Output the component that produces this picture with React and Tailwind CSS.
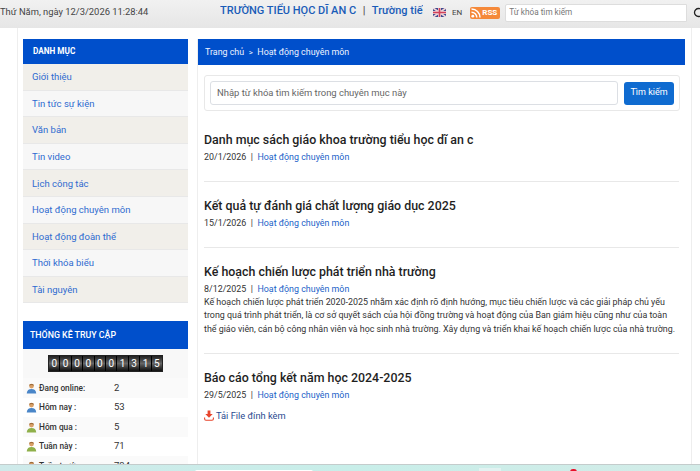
import React from 'react';
import { Search } from 'lucide-react';

const menu = ['Giới thiệu', 'Tin tức sự kiện', 'Văn bản', 'Tin video', 'Lịch công tác', 'Hoạt động chuyên môn', 'Hoạt động đoàn thể', 'Thời khóa biểu', 'Tài nguyên'];

const stats = [
  ['Đang online:', '2', '#4a86c8'],
  ['Hôm nay :', '53', '#4a86c8'],
  ['Hôm qua :', '5', '#8fb04a'],
  ['Tuần này :', '71', '#8fb04a'],
  ['Tuần trước :', '734', '#e08a2c'],
];

function UserIcon({ color }) {
  return (
    <svg width="11" height="11" viewBox="0 0 12 12" className="shrink-0">
      <circle cx="6" cy="3.4" r="2.6" fill="#d9a066" />
      <path d="M3.2 2.8C3.6 1 8.4 1 8.8 2.8 7.5 2 4.5 2 3.2 2.8z" fill="#8a5a2b" />
      <path d="M0.8 11.5C1 8 3 6.6 6 6.6s5 1.4 5.2 4.9z" fill={color} />
    </svg>
  );
}

function UkFlag() {
  return (
    <svg width="13" height="9" viewBox="0 0 13 9" className="shrink-0">
      <rect width="13" height="9" fill="#3c4a8f" />
      <path d="M0 0l13 9M13 0L0 9" stroke="#f0d4d8" strokeWidth="1.8" />
      <path d="M6.5 0v9M0 4.5h13" stroke="#f0d4d8" strokeWidth="3" />
      <path d="M6.5 0v9M0 4.5h13" stroke="#d0405a" strokeWidth="1.6" />
    </svg>
  );
}

function RssBadge() {
  return (
    <div className="flex h-[12px] w-[30px] items-center gap-[1px] overflow-hidden rounded-[2px] bg-[#f5893a] pl-[1px]">
      <svg width="10" height="10" viewBox="0 0 10 10" className="shrink-0">
        <circle cx="1.8" cy="8.2" r="1.4" fill="#fff" />
        <path d="M0.5 4.2a5.3 5.3 0 0 1 5.3 5.3M0.5 1a8.5 8.5 0 0 1 8.5 8.5" fill="none" stroke="#fff" strokeWidth="1.5" />
      </svg>
      <span className="text-[8px] leading-none font-bold text-white">RSS</span>
    </div>
  );
}

function FileIcon() {
  return (
    <svg width="10" height="11" viewBox="0 0 10 11" className="shrink-0">
      <path d="M3.6 0.5h2.8v3.6h2.3L5 7.8 1.3 4.1h2.3z" fill="#e8452c" />
      <path d="M0.6 7.6v1.2c0 .8.6 1.4 1.4 1.4h6c.8 0 1.4-.6 1.4-1.4V7.6" fill="none" stroke="#e8452c" strokeWidth="1.1" />
    </svg>
  );
}

function Meta({ date }) {
  return (
    <div className="mt-[1px] text-[8.9px] leading-[14px] text-[#333]">
      {date}<span className="mx-[4.5px]">|</span><span className="text-[#1a5fc8]">Hoạt động chuyên môn</span>
    </div>
  );
}

function Title({ children }) {
  return <h3 className="pt-[1px] text-[12.4px] leading-[18px] font-medium text-[#1f1f1f]">{children}</h3>;
}

export default function App() {
  return (
    <div className="relative h-[471px] w-[700px] overflow-hidden bg-white font-['Roboto',sans-serif]">
      {/* Thanh trên cùng */}
      <div className="flex h-[28px] items-center bg-gradient-to-b from-[#f1f1f1] to-[#e6e6e6] pb-[3px]">
        <div className="w-[220px] shrink-0 text-[9.4px] text-[#444]">Thứ Năm, ngày 12/3/2026 11:28:44</div>
        <div className="w-[203px] shrink-0 overflow-hidden pb-[3px] text-[11px] font-medium whitespace-nowrap text-[#1a5cb8]">
          TRƯỜNG TIỂU HỌC DĨ AN C<span className="mx-[6.5px] text-[#555]">|</span>Trường tiế
        </div>
        <div className="ml-[10px] flex items-center gap-[6px]">
          <UkFlag />
          <span className="text-[8px] text-[#444]">EN</span>
        </div>
        <div className="ml-[8px]"><RssBadge /></div>
        <div className="ml-[5px] flex h-[18px] w-[182px] shrink-0 items-center rounded-l-[2px] border border-[#ddd] bg-white pl-[3px] text-[8.2px] text-[#777]">Từ khóa tìm kiếm</div>
        <div className="ml-[6px] shrink-0"><Search size={12} strokeWidth={2.6} className="text-[#222]" /></div>
      </div>

      {/* Khung chính */}
      <div className="ml-[17px] flex h-[443px] w-[675px] gap-[9px] border-x border-[#eeeeee] pt-[11px] pl-[5px]">
        {/* Cột trái */}
        <div className="w-[165px] shrink-0">
          <div className="flex h-[25px] items-center bg-[#004fcb] pl-[10px] text-[8.2px] font-bold text-white">DANH MỤC</div>
          {menu.map((m, i) => (
            <div key={m} className={`flex h-[26.6px] items-center border-b border-[#e8e8e8] pt-[1px] pl-[9px] text-[9.5px] text-[#2f6bd0] ${i % 2 === 0 ? 'bg-[#f1efea]' : 'bg-[#f7f7f7]'}`}>{m}</div>
          ))}

          <div className="mt-[18px] flex h-[28px] items-center bg-[#004fcb] pl-[7px] text-[8.8px] font-medium text-white">THỐNG KÊ TRUY CẬP</div>
          <div className="flex h-[29px] items-center justify-center bg-[#f8f8f8]">
            <div className="flex h-[17px] w-[115px] items-stretch border border-[#222] bg-[#111]">
              {'0000001315'.split('').map((d, i) => (
                <span key={i} className="flex flex-1 items-center justify-center border-r border-[#000] bg-gradient-to-b from-[#222] via-[#666] to-[#111] text-[10px] leading-none text-white last:border-r-0">{d}</span>
              ))}
            </div>
          </div>
          {stats.map(([label, value, color], i) => (
            <div key={label} className={`flex h-[19.5px] items-center pl-[3px] ${i % 2 === 0 ? 'bg-[#fafafa]' : 'bg-white'}`}>
              <UserIcon color={color} />
              <span className="ml-[2px] w-[75px] text-[8.3px] font-medium text-[#333]">{label}</span>
              <span className="text-[9.5px] text-[#333]">{value}</span>
            </div>
          ))}
        </div>

        {/* Cột phải */}
        <div className="w-[488px] shrink-0 border-l border-[#eeeeee]">
          <div className="flex h-[26px] items-center bg-[#004fcb] pt-[1px] pl-[7px] text-[8.9px] text-[#eef3ff]">
            Trang chủ<span className="mx-[4.5px] text-[8px]">&gt;</span>Hoạt động chuyên môn
          </div>
          <div className="px-[6px] pt-[10px]">
            <div className="flex h-[36px] w-[476px] items-center gap-[6px] rounded-[3px] border border-[#e8e8e8] px-[5px]">
              <div className="flex h-[24px] w-[408px] items-center rounded-[3px] border border-[#dcdfe4] pt-[1px] pl-[6px] text-[9.45px] text-[#666]">Nhập từ khóa tìm kiếm trong chuyên mục này</div>
              <div className="flex h-[23px] w-[50px] items-center justify-center rounded-[3px] bg-[#0f6bd0] text-[9px] text-white">Tìm kiếm</div>
            </div>

            <div className="mt-[19px] h-[52px] border-b border-[#e8e8e8]">
              <Title>Danh mục sách giáo khoa trường tiểu học dĩ an c</Title>
              <Meta date="20/1/2026" />
            </div>
            <div className="mt-[14px] h-[52px] border-b border-[#e8e8e8]">
              <Title>Kết quả tự đánh giá chất lượng giáo dục 2025</Title>
              <Meta date="15/1/2026" />
            </div>
            <div className="mt-[14px] h-[92px] border-b border-[#e8e8e8]">
              <Title>Kế hoạch chiến lược phát triển nhà trường</Title>
              <Meta date="8/12/2025" />
              <p className="text-[8.9px] leading-[13.4px] text-[#333]">Kế hoạch chiến lược phát triển 2020-2025 nhằm xác định rõ định hướng, mục tiêu chiến lược và các giải pháp chủ yếu trong quá trình phát triển, là cơ sở quyết sách của hội đồng trường và hoạt động của Ban giám hiệu cũng như của toàn thể giáo viên, cán bộ công nhân viên và học sinh nhà trường. Xây dựng và triển khai kế hoạch chiến lược của nhà trường.</p>
            </div>
            <div className="mt-[14px]">
              <Title>Báo cáo tổng kết năm học 2024-2025</Title>
              <Meta date="29/5/2025" />
              <div className="mt-[7px] flex items-center gap-[2px] text-[9.3px] text-[#2a4a90]">
                <FileIcon />
                Tải File đính kèm
              </div>
            </div>
          </div>
        </div>
      </div>

      {/* Thanh tác vụ phủ ở đáy */}
      <div className="absolute bottom-0 left-0 h-[7px] w-full border-t border-[#c4cccc] bg-gradient-to-r from-[#cfeaea] via-[#c8eee9] to-[#d3ece8]">
        <div className="absolute top-[5px] left-[195px] h-[2px] w-[118px] rounded-t bg-white" />
        <div className="absolute top-[3px] left-[479px] h-[4px] w-[22px] bg-[#e2f2f1]" />
        <div className="absolute top-[4px] left-[570px] h-[6px] w-[7px] rounded-full bg-[#e8102a]" />
      </div>
    </div>
  );
}
